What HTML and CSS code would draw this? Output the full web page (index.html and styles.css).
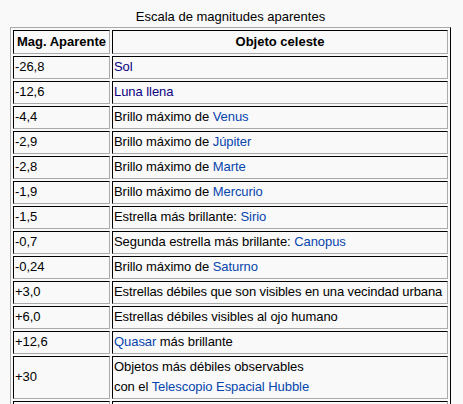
FILE: index.html
```html
<!DOCTYPE html>
<html lang="es">
<head>
<meta charset="utf-8">
<title>Escala de magnitudes aparentes</title>
<link rel="stylesheet" href="styles.css">
</head>
<body>
<table class="mag">
  <caption>Escala de magnitudes aparentes</caption>
  <colgroup><col class="c1"><col class="c2"></colgroup>
  <tr><th>Mag. Aparente</th><th>Objeto celeste</th></tr>
  <tr><td>-26,8</td><td><a class="visited" href="#">Sol</a></td></tr>
  <tr><td>-12,6</td><td><a class="visited" href="#">Luna llena</a></td></tr>
  <tr><td>-4,4</td><td>Brillo máximo de <a href="#">Venus</a></td></tr>
  <tr><td>-2,9</td><td>Brillo máximo de <a href="#">Júpiter</a></td></tr>
  <tr><td>-2,8</td><td>Brillo máximo de <a href="#">Marte</a></td></tr>
  <tr><td>-1,9</td><td>Brillo máximo de <a href="#">Mercurio</a></td></tr>
  <tr><td>-1,5</td><td>Estrella más brillante: <a href="#">Sirio</a></td></tr>
  <tr><td>-0,7</td><td>Segunda estrella más brillante: <a href="#">Canopus</a></td></tr>
  <tr><td>-0,24</td><td>Brillo máximo de <a href="#">Saturno</a></td></tr>
  <tr><td>+3,0</td><td class="long">Estrellas débiles que son visibles en una vecindad urbana</td></tr>
  <tr><td>+6,0</td><td>Estrellas débiles visibles al ojo humano</td></tr>
  <tr><td>+12,6</td><td><a href="#">Quasar</a> más brillante</td></tr>
  <tr><td>+30</td><td>Objetos más débiles observables<br>con el <a href="#">Telescopio Espacial Hubble</a></td></tr>
  <tr><td>&nbsp;</td><td>&nbsp;</td></tr>
</table>
</body>
</html>
```
FILE: styles.css
```css
html, body {
  margin: 0;
  background: #f9f9f9;
}
body {
  padding: 7px 0 0 10px;
  font-family: "Liberation Sans", Arial, sans-serif;
  font-size: 13px;
  line-height: 20px;
  color: #000;
}
.mag {
  width: 441px;
  table-layout: fixed;
  border-collapse: separate;
  border-spacing: 2px;
  border: 1px solid;
  border-color: #aaa #000 #000 #aaa;
  background: #f9f9f9;
}
.mag caption {
  text-align: center;
  line-height: 20px;
}
.c1 { width: 97px; }
.mag th, .mag td {
  border: 1px solid;
  border-color: #000 #aaa #aaa #000;
  padding: 0 1px 1px 1px;
  text-align: left;
  vertical-align: middle;
  letter-spacing: -0.06px;
}
.mag th {
  font-weight: bold;
  text-align: center;
  padding: 1px;
  letter-spacing: 0;
  white-space: nowrap;
}
.mag td.long {
  white-space: nowrap;
  letter-spacing: -0.1px;
}
a { color: #0645ad; text-decoration: none; }
a.visited { color: #0b0080; }
```
